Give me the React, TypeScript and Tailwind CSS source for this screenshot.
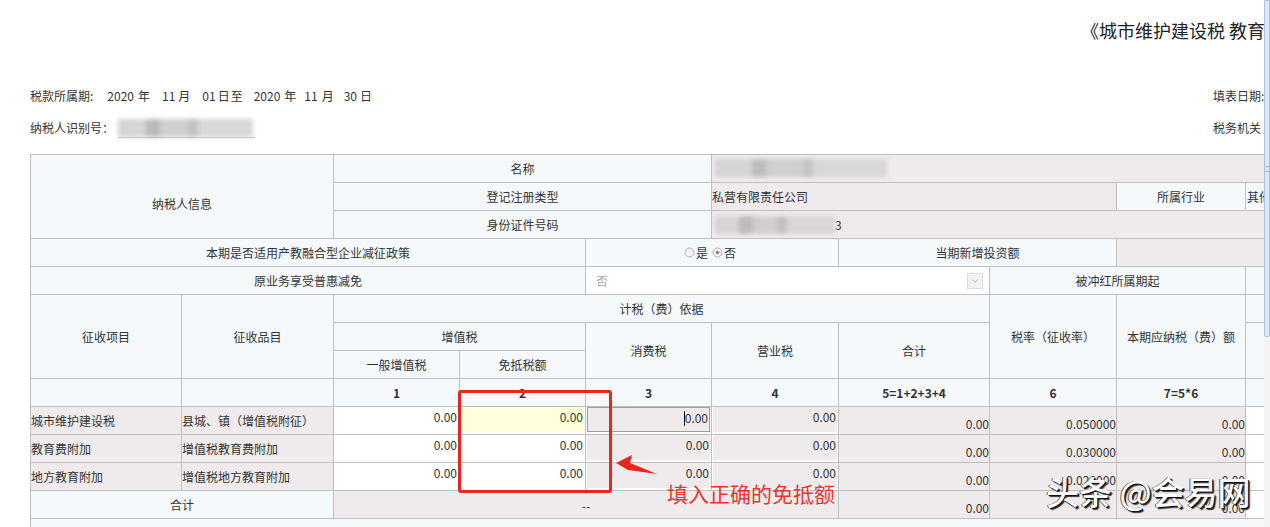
import { ChevronDown } from "lucide-react";
import type { ReactNode } from "react";

const font = "font-['Microsoft_YaHei','Noto_Sans_CJK_SC',sans-serif]";
const bd = "border border-[#bfbfbf]";
const lab = "bg-[#f5f9fc]";
const gray = "bg-[#efebec]";

function Blur({ w, className = "" }: { w: number; className?: string }) {
  // masked value: blurred gray blocks
  return (
    <span className={`inline-flex h-[18px] items-stretch blur-[2px] ${className}`} style={{ width: w }}>
      <span className="flex-1 bg-[#d6d4d5]" />
      <span className="w-[14px] bg-[#bdbbbc]" />
      <span className="flex-1 bg-[#d0cecf]" />
      <span className="w-[10px] bg-[#c4c2c3]" />
      <span className="flex-[2] bg-[#d8d6d7]" />
    </span>
  );
}

function Radio({ on }: { on?: boolean }) {
  return (
    <svg width="11" height="11" viewBox="0 0 11 11" className="mr-[1px]">
      <circle cx="5.5" cy="5.5" r="4.5" fill="#f3f3f3" stroke="#b0b0b0" strokeWidth="1" />
      {on && <circle cx="5.5" cy="5.5" r="1.8" fill="#8a8a8a" />}
    </svg>
  );
}

function In({ children, tone = "white", focus = false }: { children: ReactNode; tone?: "white" | "gray" | "yellow"; focus?: boolean }) {
  const bg = tone === "gray" ? "bg-[#efebec]" : tone === "yellow" ? "bg-[#ffffdc]" : "bg-white";
  return (
    <div className={`mx-[1px] h-[25px] ${bg} ${focus ? "border border-[#7aa3d6]" : ""} flex justify-end pr-[1px] pt-[1px] leading-[18px]`}>
      {focus && <span className="mt-[2px] h-[15px] w-px bg-black" />}
      {children}
    </div>
  );
}

const rows = [
  ["城市维护建设税", "县城、镇（增值税附征）", "0.050000"],
  ["教育费附加", "增值税教育费附加", "0.030000"],
  ["地方教育附加", "增值税地方教育附加", "0.020000"],
];

// period line pieces: [text, margin-left]
const period: [string, string][] = [
  ["2020", "ml-[14px]"],
  ["年", "ml-[4px]"],
  ["11", "ml-[12px]"],
  ["月", "ml-[3px]"],
  ["01", "ml-[12px]"],
  ["日", "ml-[2px]"],
  ["至", "ml-[1px]"],
  ["2020", "ml-[11px]"],
  ["年", "ml-[4px]"],
  ["11", "ml-[8px]"],
  ["月", "ml-[4px]"],
  ["30", "ml-[10px]"],
  ["日", "ml-[3px]"],
];

export default function App() {
  return (
    <div className={`relative flex h-[527px] w-[1270px] overflow-hidden bg-white text-[12px] text-[#333] ${font}`}>
      <div className="w-[1264px] shrink-0 overflow-hidden">
        {/* title */}
        <div className="h-[78px] whitespace-nowrap pl-[1081px] pt-[19px] text-[18px] leading-[22px] text-[#222]">
          《城市维护建设税 教育费附加 地方教育附加申报表》
        </div>
        <div className="flex h-[33px] items-center justify-between pl-[30px] pt-[2px]">
          <span className="flex whitespace-nowrap">
            <span>税款所属期:</span>
            {period.map(([t, m], i) => (
              <span key={i} className={m}>
                {t}
              </span>
            ))}
          </span>
          <span className="w-[51px] whitespace-nowrap">填表日期:</span>
        </div>
        <div className="flex h-[33px] items-center justify-between pl-[30px]">
          <span className="flex items-center">
            纳税人识别号：
            <span className="ml-[4px] flex h-[20px] w-[137px] flex-col justify-between border-b border-[#bbb]">
              <Blur w={135} className="mt-[1px] h-[16px]" />
            </span>
          </span>
          <span className="w-[51px] whitespace-nowrap">税务机关</span>
        </div>
        <div className="h-[10px]" />
        <table className="ml-[30px] w-[1290px] table-fixed border-collapse">
          <colgroup>
            <col className="w-[151px]" />
            <col className="w-[152px]" />
            <col className="w-[126px]" />
            <col className="w-[126px]" />
            <col className="w-[126px]" />
            <col className="w-[127px]" />
            <col className="w-[151px]" />
            <col className="w-[127px]" />
            <col className="w-[129px]" />
            <col className="w-[75px]" />
          </colgroup>
          <tbody>
            <tr className="h-[28px]">
              <td rowSpan={3} colSpan={2} className={`${bd} ${lab} pt-[14px] text-center`}>纳税人信息</td>
              <td colSpan={3} className={`${bd} ${lab} text-center`}>名称</td>
              <td colSpan={5} className={`${bd} ${gray} px-[3px]`}>
                <Blur w={172} className="mt-[3px]" />
              </td>
            </tr>
            <tr className="h-[28px]">
              <td colSpan={3} className={`${bd} ${lab} text-center`}>登记注册类型</td>
              <td colSpan={3} className={`${bd} ${gray}`}>私营有限责任公司</td>
              <td className={`${bd} ${lab} text-center`}>所属行业</td>
              <td className={`${bd} ${lab} whitespace-nowrap pl-[1px]`}>其他</td>
            </tr>
            <tr className="h-[28px]">
              <td colSpan={3} className={`${bd} ${lab} text-center`}>身份证件号码</td>
              <td colSpan={5} className={`${bd} ${gray} px-[3px]`}>
                <span className="flex items-center">
                  <Blur w={120} />
                  <span>3</span>
                </span>
              </td>
            </tr>
            <tr className="h-[28px]">
              <td colSpan={4} className={`${bd} ${lab} text-center`}>本期是否适用产教融合型企业减征政策</td>
              <td colSpan={2} className={`${bd} ${lab}`}>
                <span className="flex items-center justify-center pr-[4px]">
                  <Radio />是<span className="w-[4px]" />
                  <Radio on />否
                </span>
              </td>
              <td colSpan={2} className={`${bd} ${lab} text-center`}>当期新增投资额</td>
              <td colSpan={2} className={`${bd} ${gray}`} />
            </tr>
            <tr className="h-[28px]">
              <td colSpan={4} className={`${bd} ${lab} text-center`}>原业务享受普惠减免</td>
              <td colSpan={3} className={`${bd} bg-white`}>
                <div className="flex items-center justify-between pl-[10px] pr-[6px]">
                  <span className="text-[#aaa]">否</span>
                  <span className="flex h-[16px] w-[16px] items-center justify-center border border-[#dcdcdc] bg-[#f2f2f2]">
                    <ChevronDown size={10} color="#b0b0b0" strokeWidth={2} />
                  </span>
                </div>
              </td>
              <td colSpan={2} className={`${bd} ${lab} text-center`}>被冲红所属期起</td>
              <td className={`${bd} ${lab}`} />
            </tr>
            <tr className="h-[28px]">
              <td rowSpan={3} className={`${bd} ${lab} text-center`}>征收项目</td>
              <td rowSpan={3} className={`${bd} ${lab} text-center`}>征收品目</td>
              <td colSpan={5} className={`${bd} ${lab} text-center`}>计税（费）依据</td>
              <td rowSpan={3} className={`${bd} ${lab} text-center`}>税率（征收率）</td>
              <td rowSpan={3} className={`${bd} ${lab} text-center`}>本期应纳税（费）额</td>
              <td className={`${bd} ${lab}`} />
            </tr>
            <tr className="h-[28px]">
              <td colSpan={2} className={`${bd} ${lab} text-center`}>增值税</td>
              <td rowSpan={2} className={`${bd} ${lab} text-center`}>消费税</td>
              <td rowSpan={2} className={`${bd} ${lab} text-center`}>营业税</td>
              <td rowSpan={2} className={`${bd} ${lab} text-center`}>合计</td>
              <td rowSpan={2} className={`${bd} ${lab}`} />
            </tr>
            <tr className="h-[28px]">
              <td className={`${bd} ${lab} text-center`}>一般增值税</td>
              <td className={`${bd} ${lab} text-center`}>免抵税额</td>
            </tr>
            <tr className="h-[28px] font-bold">
              <td className={`${bd} ${lab}`} />
              <td className={`${bd} ${lab}`} />
              <td className={`${bd} ${lab} text-center`}>1</td>
              <td className={`${bd} ${lab} text-center`}>2</td>
              <td className={`${bd} ${lab} text-center`}>3</td>
              <td className={`${bd} ${lab} text-center`}>4</td>
              <td className={`${bd} ${lab} text-center`}>5=1+2+3+4</td>
              <td className={`${bd} ${lab} text-center`}>6</td>
              <td className={`${bd} ${lab} text-center`}>7=5*6</td>
              <td className={`${bd} ${lab}`} />
            </tr>
            {rows.map(([item, sub, rate], i) => (
              <tr key={item} className="h-[28px]">
                <td className={`${bd} ${gray} whitespace-nowrap`}>{item}</td>
                <td className={`${bd} ${gray} whitespace-nowrap`}>{sub}</td>
                <td className={`${bd} bg-white align-top`}>
                  <In>0.00</In>
                </td>
                <td className={`${bd} bg-white align-top`}>
                  <In tone={i === 0 ? "yellow" : "white"}>0.00</In>
                </td>
                <td className={`${bd} bg-white align-top`}>
                  <In tone="gray" focus={i === 0}>0.00</In>
                </td>
                <td className={`${bd} bg-white align-top`}>
                  <In tone="gray">0.00</In>
                </td>
                <td className={`${bd} ${gray} pb-[1px] text-right align-bottom`}>0.00</td>
                <td className={`${bd} ${gray} pb-[1px] text-right align-bottom`}>{rate}</td>
                <td className={`${bd} ${gray} pb-[1px] text-right align-bottom`}>0.00</td>
                <td className={`${bd} bg-white`} />
              </tr>
            ))}
            <tr className="h-[28px]">
              <td colSpan={2} className={`${bd} ${lab} text-center`}>合计</td>
              <td colSpan={4} className={`${bd} ${gray} pt-[2px] text-center`}>--</td>
              <td className={`${bd} ${gray} pb-[1px] text-right align-bottom`}>0.00</td>
              <td className={`${bd} ${gray} pt-[2px] text-center`}>--</td>
              <td className={`${bd} ${gray} pb-[1px] text-right align-bottom`}>0.00</td>
              <td className={`${bd} bg-white`} />
            </tr>
            <tr className="h-[28px]">
              <td colSpan={10} className={`${bd} ${lab}`} />
            </tr>
          </tbody>
        </table>
      </div>

      {/* scrollbar */}
      <div className="flex w-[6px] shrink-0 flex-col bg-[#f4f4f4]">
        <div className="flex h-[337px] items-center justify-center rounded-b-[2px] border border-[#a9c2e2] bg-[#dce8f6]">
          <span className="h-[6px] w-[3px] border-y border-[#9ab]" />
        </div>
      </div>

      {/* annotation overlay */}
      <div className="pointer-events-none absolute left-[458px] top-[390px] h-[103px] w-[154px] rounded-[3px] border-[3px] border-[#e8251f]" />
      <svg className="pointer-events-none absolute left-0 top-0" width="1270" height="527">
        <polygon points="616,463 632,455 630,463 657,474 628,470" fill="#e8251f" />
      </svg>
      <div className="pointer-events-none absolute left-[667px] top-[481px] text-[21px] leading-[24px] text-[#e8352c]">
        填入正确的免抵额
      </div>
      <div className="pointer-events-none absolute left-[1046px] top-[472px] whitespace-nowrap text-[33px] font-medium leading-[38px] text-white [text-shadow:1px_1px_0_#111,2px_2px_1px_#333,-1px_0_0_#555]">
        头条 @会易网
      </div>
    </div>
  );
}
